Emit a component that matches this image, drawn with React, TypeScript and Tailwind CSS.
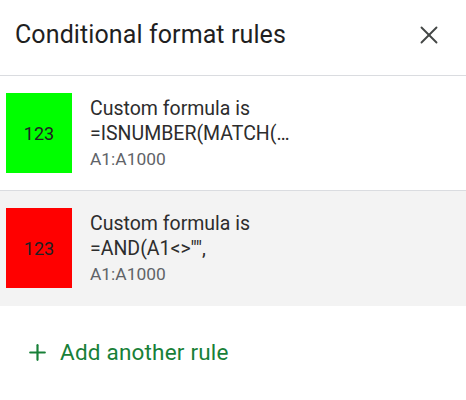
import { X, Plus } from "lucide-react";

const rules = [
  { color: "bg-[#00ff00]", formula: "=ISNUMBER(MATCH(…", range: "A1:A1000", active: false },
  { color: "bg-[#ff0000]", formula: '=AND(A1<>"",', range: "A1:A1000", active: true },
];

export default function App() {
  return (
    <div className="w-[466px] h-[400px] bg-white font-['Roboto',sans-serif] text-[#202124]">
      <div className="flex items-center justify-between h-[76px] pl-[15px] pr-[22px] border-b border-[#dadce0]">
        <div className="text-[25px] leading-none tracking-[0.1px] text-[#1f1f1f] -mt-[6px]">
          Conditional format rules
        </div>
        <X className="w-[30px] h-[30px] text-[#444746] -mt-[6px]" strokeWidth={1.5} />
      </div>
      {rules.map((r, i) => (
        <div
          key={i}
          className={`flex items-center h-[115px] pl-[6px] border-b ${
            r.active ? "bg-[#f3f3f3] border-transparent" : "border-[#dadce0]"
          }`}
        >
          <div
            className={`w-[66px] h-[80px] ${r.color} flex items-center justify-center text-[18px] text-[#202124] shrink-0`}
          >
            123
          </div>
          <div className="ml-[18px] flex flex-col pt-[2px]">
            <div className="text-[19.5px] leading-[25px] text-[#2d2d2d]">Custom formula is</div>
            <div className="text-[19.5px] leading-[25px] text-[#2d2d2d]">{r.formula}</div>
            <div className="text-[17.4px] leading-[26px] text-[#5f6368]">{r.range}</div>
          </div>
        </div>
      ))}
      <div className="flex items-center gap-[10px] pl-[25px] pt-[30px] text-[#188038]">
        <Plus className="w-[25px] h-[25px]" strokeWidth={2.1} />
        <span className="text-[22.5px] tracking-[0.2px]">Add another rule</span>
      </div>
    </div>
  );
}
